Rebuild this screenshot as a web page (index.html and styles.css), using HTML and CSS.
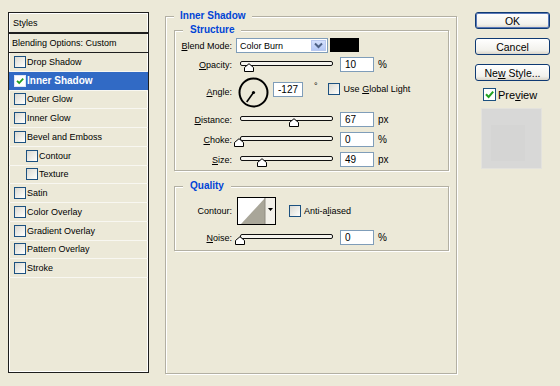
FILE: index.html
```html
<!DOCTYPE html>
<html>
<head>
<meta charset="utf-8">
<link rel="stylesheet" href="styles.css">
</head>
<body>
<div class="app">
  <div class="styles-panel">
    <div class="sp-head">Styles</div>
    <div class="sp-blend">Blending Options: Custom</div>
    <div class="sp-item"><span class="cb"></span><span>Drop Shadow</span></div>
    <div class="sp-item sel"><span class="cb"><svg width="10" height="10" viewBox="0 0 10 10"><path d="M2 4.8 L4.2 7 L8.2 2.6" fill="none" stroke="#21A121" stroke-width="1.8"/></svg></span><span>Inner Shadow</span></div>
    <div class="sp-item"><span class="cb"></span><span>Outer Glow</span></div>
    <div class="sp-item"><span class="cb"></span><span>Inner Glow</span></div>
    <div class="sp-item"><span class="cb"></span><span>Bevel and Emboss</span></div>
    <div class="sp-item sub"><span class="cb"></span><span>Contour</span></div>
    <div class="sp-item sub"><span class="cb"></span><span>Texture</span></div>
    <div class="sp-item"><span class="cb"></span><span>Satin</span></div>
    <div class="sp-item"><span class="cb"></span><span>Color Overlay</span></div>
    <div class="sp-item"><span class="cb"></span><span>Gradient Overlay</span></div>
    <div class="sp-item"><span class="cb"></span><span>Pattern Overlay</span></div>
    <div class="sp-item"><span class="cb"></span><span>Stroke</span></div>
  </div>

  <fieldset class="grp outer">
    <legend>Inner Shadow</legend>

    <fieldset class="grp inner structure">
      <legend>Structure</legend>
      <div class="rows">
        <div class="row r-blend">
          <span class="lbl"><u>B</u>lend Mode:</span>
          <div class="select">
            <span class="sel-text">Color Burn</span>
            <span class="sel-btn"><svg width="9" height="7" viewBox="0 0 9 7"><path d="M1 1.5 L4.5 5 L8 1.5" fill="none" stroke="#4D6185" stroke-width="2"/></svg></span>
          </div>
          <div class="color-swatch"></div>
        </div>

        <div class="row">
          <span class="lbl"><u>O</u>pacity:</span>
          <div class="slider"><div class="track"></div><svg class="thumb" style="left:4px" width="10" height="9" viewBox="0 0 10 9"><path d="M5 0.7 L9.5 4.5 L9.5 8.5 L0.5 8.5 L0.5 4.5 Z" fill="#fff" stroke="#000"/></svg></div>
          <div class="num">10</div><span class="unit">%</span>
        </div>

        <div class="row r-angle">
          <span class="lbl"><u>A</u>ngle:</span>
          <svg class="dial" width="31" height="31" viewBox="0 0 31 31"><circle cx="15.5" cy="15.5" r="14" fill="none" stroke="#000" stroke-width="2"/><line x1="15.5" y1="15.5" x2="8.7" y2="25" stroke="#000" stroke-width="1.6"/><circle cx="15.5" cy="15.5" r="1.6" fill="#000"/></svg>
          <div class="num angle-num">-127</div>
          <span class="deg">°</span>
          <span class="cb global-cb"></span>
          <span class="cb-label">Use <u>G</u>lobal Light</span>
        </div>

        <div class="row">
          <span class="lbl"><u>D</u>istance:</span>
          <div class="slider"><div class="track"></div><svg class="thumb" style="left:49px" width="10" height="9" viewBox="0 0 10 9"><path d="M5 0.7 L9.5 4.5 L9.5 8.5 L0.5 8.5 L0.5 4.5 Z" fill="#fff" stroke="#000"/></svg></div>
          <div class="num">67</div><span class="unit">px</span>
        </div>

        <div class="row">
          <span class="lbl"><u>C</u>hoke:</span>
          <div class="slider"><div class="track"></div><svg class="thumb" style="left:-6px" width="10" height="9" viewBox="0 0 10 9"><path d="M5 0.7 L9.5 4.5 L9.5 8.5 L0.5 8.5 L0.5 4.5 Z" fill="#fff" stroke="#000"/></svg></div>
          <div class="num">0</div><span class="unit">%</span>
        </div>

        <div class="row">
          <span class="lbl"><u>S</u>ize:</span>
          <div class="slider"><div class="track"></div><svg class="thumb" style="left:17px" width="10" height="9" viewBox="0 0 10 9"><path d="M5 0.7 L9.5 4.5 L9.5 8.5 L0.5 8.5 L0.5 4.5 Z" fill="#fff" stroke="#000"/></svg></div>
          <div class="num">49</div><span class="unit">px</span>
        </div>
      </div>
    </fieldset>

    <fieldset class="grp inner quality">
      <legend>Quality</legend>
      <div class="rows q-rows">
        <div class="row r-contour">
          <span class="lbl">Contour:</span>
          <svg class="contour" width="39" height="28" viewBox="0 0 39 28">
            <rect x="0.5" y="0.5" width="38" height="27" fill="#fff" stroke="#000"/>
            <polygon points="4,27 28,1 28,27" fill="#A9A699"/>
            <rect x="28" y="1" width="10" height="26" fill="#F3F1EA"/>
            <line x1="28" y1="1" x2="28" y2="27" stroke="#8F8C80"/>
            <polygon points="31,11 36,11 33.5,14" fill="#000"/>
          </svg>
          <span class="cb aa-cb"></span>
          <span class="cb-label">Anti-a<u>l</u>iased</span>
        </div>
        <div class="row">
          <span class="lbl"><u>N</u>oise:</span>
          <div class="slider"><div class="track"></div><svg class="thumb" style="left:-5px" width="10" height="9" viewBox="0 0 10 9"><path d="M5 0.7 L9.5 4.5 L9.5 8.5 L0.5 8.5 L0.5 4.5 Z" fill="#fff" stroke="#000"/></svg></div>
          <div class="num">0</div><span class="unit">%</span>
        </div>
      </div>
    </fieldset>
  </fieldset>

  <div class="side">
    <div class="btn default"><span>OK</span></div>
    <div class="btn"><span>Cancel</span></div>
    <div class="btn"><span>Ne<u>w</u> Style...</span></div>
    <div class="preview-row">
      <span class="cb big"><svg width="11" height="11" viewBox="0 0 11 11"><path d="M2 5.3 L4.6 8 L9.2 2.6" fill="none" stroke="#21A121" stroke-width="2"/></svg></span>
      <span>Pre<u>v</u>iew</span>
    </div>
    <div class="preview-box"><div class="preview-inner"></div></div>
  </div>
</div>
</body>
</html>
```

FILE: styles.css
```css
html, body {
  margin: 0;
  padding: 0;
}
body {
  background: #ECE9D8;
  font-family: "Liberation Sans", Arial, sans-serif;
  font-size: 9px;
  color: #000;
  width: 560px;
  height: 386px;
  overflow: hidden;
}
u { text-decoration: underline; text-underline-offset: 1px; }

.app {
  display: flex;
  align-items: flex-start;
  padding-left: 8px;
}

/* ---------- left list ---------- */
.styles-panel {
  margin-top: 12px;
  width: 141px;
  height: 361px;
  box-sizing: border-box;
  border: 1px solid #1E1E1E;
  box-shadow: inset 0 0 0 1px #fff;
  display: flex;
  flex-direction: column;
}
.sp-head {
  height: 19px;
  border-bottom: 2px solid #1E1E1E;
  padding-left: 4px;
  display: flex;
  align-items: center;
}
.sp-blend {
  height: 18px;
  border-bottom: 1px solid #1E1E1E;
  padding-left: 3px;
  display: flex;
  align-items: center;
}
.sp-item {
  height: 18.75px;
  box-sizing: border-box;
  border-bottom: 1px solid #F8F7F1;
  padding-left: 5px;
  display: flex;
  align-items: center;
  gap: 1px;
  flex: none;
}
.sp-item.sub { padding-left: 17px; }
.sp-item.sel {
  background: #316AC5;
  color: #fff;
  font-weight: bold;
  font-size: 10px;
}
.cb {
  width: 12px;
  height: 12px;
  box-sizing: border-box;
  border: 1px solid #1C5180;
  background: linear-gradient(135deg, #DAD9D2, #F4F4F0 70%, #fff);
  display: inline-flex;
  align-items: center;
  justify-content: center;
  flex: none;
}
.sel .cb { background: #fff; border-color: #DDE6F6; }
.cb.big { width: 13px; height: 13px; background: #fff; }

/* ---------- group boxes ---------- */
fieldset.grp {
  margin: 0;
  min-width: 0;
  border: 1px solid #B3B0A3;
  box-shadow: 1px 1px 0 #fff, inset 1px 1px 0 #fff;
}
fieldset.grp > legend {
  color: #0044D6;
  font-weight: bold;
  font-size: 10px;
  line-height: 12px;
  background: #ECE9D8;
}
fieldset.outer {
  margin: 10px 0 0 16px;
  width: 292px;
  height: 364px;
  box-sizing: border-box;
  padding: 2px 7px 0 8px;
}
fieldset.outer > legend {
  padding: 0 6px;
}
fieldset.inner {
  padding: 2px 0 3px 2px;
}
fieldset.inner > legend {
  margin-left: 6px;
  padding: 0 7px;
}
fieldset.quality {
  margin-top: 9px;
  padding: 5px 0 5px 2px;
}

.rows {
  display: flex;
  flex-direction: column;
  gap: 5px;
}
.q-rows { gap: 6px; }
.row {
  display: flex;
  align-items: center;
  height: 15px;
}
.r-blend { margin-bottom: -1px; }
.r-angle { height: 30px; }
.r-contour { height: 27px; }
.lbl {
  width: 55px;
  text-align: right;
  flex: none;
}

/* select */
.select {
  margin-left: 4px;
  width: 92px;
  height: 15px;
  box-sizing: border-box;
  border: 1px solid #7F9DB9;
  background: #fff;
  display: flex;
  align-items: center;
  justify-content: space-between;
  padding: 0 1px 0 3px;
}
.sel-btn {
  width: 15px;
  height: 11px;
  box-sizing: border-box;
  background: linear-gradient(#D4E0FD, #B4C8F6);
  border: 1px solid #B9C9EF;
  display: flex;
  align-items: center;
  justify-content: center;
}
.color-swatch {
  margin-left: 2px;
  width: 29px;
  height: 14px;
  background: #000;
  align-self: flex-start;
}

/* slider */
.slider {
  position: relative;
  width: 93px;
  height: 15px;
  margin-left: 8px;
  margin-right: 7px;
  flex: none;
}
.track {
  margin-top: 4px;
  height: 5px;
  box-sizing: border-box;
  border: 1px solid #111;
  border-radius: 2px;
  background: #F6F5EF;
}
.thumb {
  position: absolute;
  top: 6px;
}
.num {
  width: 34px;
  height: 15px;
  box-sizing: border-box;
  border: 1px solid #7F9DB9;
  background: #fff;
  padding-left: 4px;
  font-size: 10px;
  line-height: 13px;
  flex: none;
}
.unit {
  margin-left: 4px;
  font-size: 10px;
}

/* angle */
.dial { margin-left: 6px; flex: none; }
.angle-num { width: 30px; margin-left: 4px; margin-top: -6px; }
.deg {
  margin-left: 11px;
  align-self: flex-start;
  margin-top: 4px;
  font-size: 9px;
}
.global-cb { margin-left: 10px; margin-top: -6px; }
.cb-label { margin-left: 4px; }
.r-angle .cb-label { margin-top: -6px; }

/* contour */
.contour { margin-left: 5px; flex: none; }
.aa-cb { margin-left: 13px; }
.r-contour .cb-label { margin-left: 3px; }

/* ---------- right side ---------- */
.side {
  margin: 12px 0 0 18px;
  width: 75px;
  display: flex;
  flex-direction: column;
  gap: 9px;
}
.btn {
  height: 17px;
  box-sizing: border-box;
  border: 1px solid #0F3A73;
  border-radius: 3px;
  background: linear-gradient(#FFFFFF, #F2F1EC 75%, #DAD5CA);
  font-size: 10.5px;
  display: flex;
  align-items: center;
  justify-content: center;
}
.btn.default {
  box-shadow: inset 0 0 0 1px #5A78B8;
}
.preview-row {
  margin: -2px 0 0 8px;
  display: flex;
  align-items: center;
  gap: 2px;
  font-size: 11px;
}
.preview-box {
  margin: -2px 0 0 6px;
  width: 61px;
  height: 61px;
  box-sizing: border-box;
  background: #D8D8D7;
  border: 1px solid #E3E2DD;
  padding: 16px 0 0 9px;
}
.preview-inner {
  width: 34px;
  height: 36px;
  background: #D5D5D4;
}
```
